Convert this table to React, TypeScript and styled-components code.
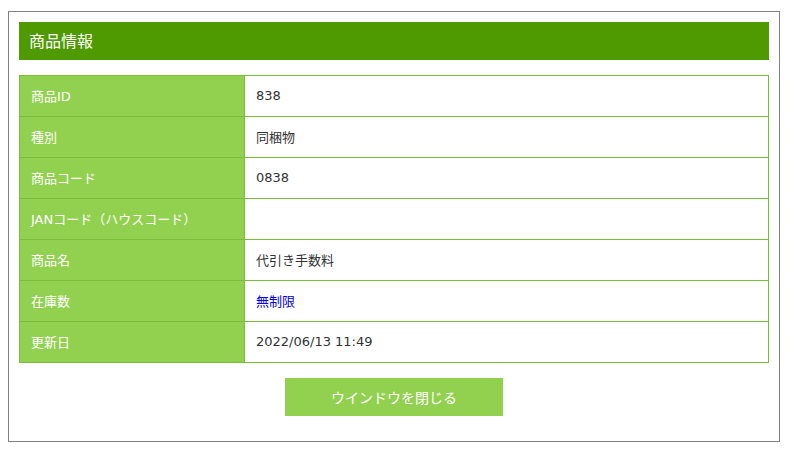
import styled, { createGlobalStyle } from "styled-components";

const GlobalStyle = createGlobalStyle`
    body {
        margin: 8px;
        background-color: #ffffff;
        font-family: "DejaVu Sans", "Noto Sans CJK JP", sans-serif;
        color: #333333;
    }
`

interface Row {
    label: string
    value: string
    link?: boolean
}

const rows: Row[] = [
    { label: "商品ID", value: "838" },
    { label: "種別", value: "同梱物" },
    { label: "商品コード", value: "0838" },
    { label: "JANコード（ハウスコード）", value: "" },
    { label: "商品名", value: "代引き手数料" },
    { label: "在庫数", value: "無制限", link: true },
    { label: "更新日", value: "2022/06/13 11:49" },
];

export default function App() {
    return (
        <>
            <GlobalStyle />
            <Frame>
                <Title>商品情報</Title>
                <InfoTable>
                    <tbody>
                        {rows.map((row) => (
                            <tr key={row.label}>
                                <LabelCell>{row.label}</LabelCell>
                                <ValueCell link={row.link}>{row.value}</ValueCell>
                            </tr>
                        ))}
                    </tbody>
                </InfoTable>
                <ButtonRow>
                    <CloseButton>ウインドウを閉じる</CloseButton>
                </ButtonRow>
            </Frame>
        </>
    );
}

const Frame = styled.div`
    box-sizing: border-box;
    width: 772px;
    margin-top: 3px;
    padding: 10px 10px 25px;

    border: 1px solid #808080;
`

const Title = styled.h1`
    box-sizing: border-box;
    height: 38px;
    margin: 0;
    padding: 0 0 2px 10px;

    display: flex;
    align-items: center;

    background-color: #4e9a00;
    color: #ffffff;

    font-family: "Noto Sans CJK JP", sans-serif;
    font-size: 16px;
    font-weight: normal;
`

const InfoTable = styled.table`
    width: 100%;
    margin-top: 15px;

    border-collapse: collapse;
    border: 1px solid #7dbb3c;
`

const LabelCell = styled.th`
    box-sizing: border-box;
    width: 225px;
    height: 41px;
    padding: 0 11px 2px;

    background-color: #92d050;
    border: 1px solid #7dbb3c;
    color: #ffffff;

    text-align: left;
    font-size: 13px;
    font-weight: normal;
`

interface ValueProps {
    link?: boolean
}

const ValueCell = styled.td<ValueProps>`
    box-sizing: border-box;
    height: 41px;
    padding: 0 11px 2px;

    border: 1px solid #7dbb3c;
    color: ${(props) => props.link ? "#0000ee" : "#333333"};

    font-size: 13px;
`

const ButtonRow = styled.div`
    display: flex;
    justify-content: center;

    margin-top: 15px;
`

const CloseButton = styled.button`
    width: 218px;
    height: 38px;
    padding-bottom: 2px;

    border: none;
    background-color: #92d050;
    color: #ffffff;

    font-family: "Noto Sans CJK JP", sans-serif;
    font-size: 14px;
    cursor: pointer;
`
